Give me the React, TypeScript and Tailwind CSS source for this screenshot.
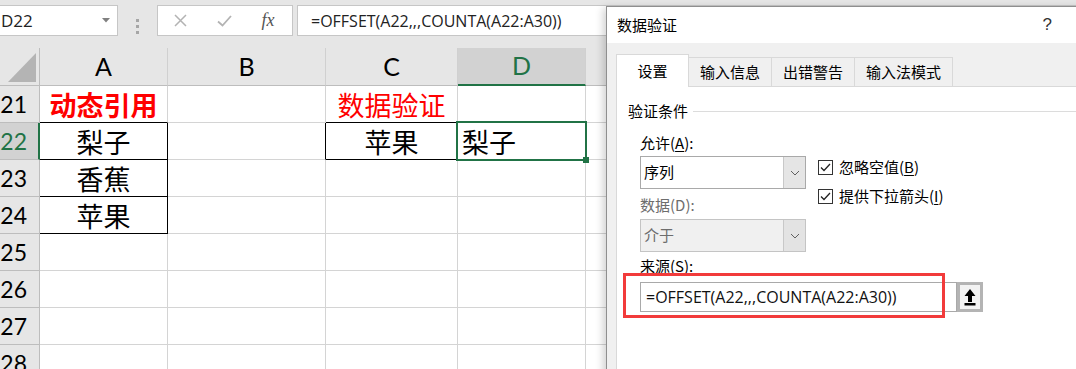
import React from 'react';

type Cell = { t?: string; c?: string; x?: string };

const letters = ['A', 'B', 'C', 'D', 'E'];

const rows: { n: number; cells: Cell[] }[] = [
  {
    n: 21,
    cells: [
      { t: '动态引用', c: 'border-b-black', x: 'justify-center font-bold text-[#ff0000]' },
      {},
      { t: '数据验证', c: 'border-b-black', x: 'justify-center text-[#ff0000]' },
      {},
      {},
    ],
  },
  {
    n: 22,
    cells: [
      { t: '梨子', c: 'border-b-black border-r-black', x: 'justify-center text-black' },
      { c: 'border-r-black' },
      { t: '苹果', c: 'border-b-black', x: 'justify-center text-black' },
      { t: '梨子', x: 'pl-[4px] text-black' },
      {},
    ],
  },
  { n: 23, cells: [{ t: '香蕉', c: 'border-b-black border-r-black', x: 'justify-center text-black' }, {}, {}, {}, {}] },
  { n: 24, cells: [{ t: '苹果', c: 'border-b-black border-r-black', x: 'justify-center text-black' }, {}, {}, {}, {}] },
  { n: 25, cells: [{}, {}, {}, {}, {}] },
  { n: 26, cells: [{}, {}, {}, {}, {}] },
  { n: 27, cells: [{}, {}, {}, {}, {}] },
  { n: 28, cells: [{}, {}, {}, {}, {}] },
];

function Chevron() {
  return (
    <svg width="10" height="6" viewBox="0 0 10 6">
      <path d="M1 1l4 4 4-4" fill="none" stroke="#606060" strokeWidth="1" />
    </svg>
  );
}

function Check() {
  return (
    <div className="flex h-[15px] w-[15px] items-center justify-center border border-[#333] bg-white">
      <svg width="11" height="9" viewBox="0 0 11 9">
        <path d="M1 4.5l3 3L10 1" fill="none" stroke="#222" strokeWidth="1.3" />
      </svg>
    </div>
  );
}

function Toolbar() {
  return (
    <div className="flex h-[48px] bg-[#e6e6e6] pt-[5px]">
      <div className="flex h-[31px] w-[118px] items-center justify-between border border-l-0 border-[#c6c6c6] bg-white pl-[1px] pr-[7px] text-[17px] text-[#222]">
        <span>D22</span>
        <svg width="8" height="5" viewBox="0 0 8 5">
          <path d="M0 0h8L4 4.5z" fill="#808080" />
        </svg>
      </div>
      <div className="flex w-[39px] flex-col items-center justify-center gap-[3px]">
        <span className="h-[3px] w-[3px] bg-[#a6a6a6]" />
        <span className="h-[3px] w-[3px] bg-[#a6a6a6]" />
        <span className="h-[3px] w-[3px] bg-[#a6a6a6]" />
      </div>
      <div className="flex h-[31px] w-[136px] items-center border border-[#c6c6c6] bg-white">
        <span className="flex w-[44px] justify-center">
          <svg width="13" height="13" viewBox="0 0 13 13">
            <path d="M1 1l11 11M12 1L1 12" stroke="#b3b3b3" strokeWidth="1.5" />
          </svg>
        </span>
        <span className="flex w-[44px] justify-center">
          <svg width="15" height="12" viewBox="0 0 15 12">
            <path d="M1 6.5l4.5 4L14 1" fill="none" stroke="#b3b3b3" strokeWidth="1.8" />
          </svg>
        </span>
        <span className="flex w-[44px] justify-center font-['Liberation_Serif',serif] text-[18px] italic text-[#555]">
          fx
        </span>
      </div>
      <div className="ml-[4px] flex h-[31px] flex-1 items-center border border-[#c6c6c6] bg-white pl-[13px] text-[16px] text-[#222]">
        =OFFSET(A22,,,COUNTA(A22:A30))
      </div>
    </div>
  );
}

function Sheet() {
  return (
    <div className="grid grid-cols-[40px_128px_158px_132px_128px_1fr] font-['Noto_Sans_CJK_SC',sans-serif]">
      <div className="relative h-[38px] border-r border-b border-[#bdbdbd] bg-[#e6e6e6]">
        <svg className="absolute left-[8px] top-[5px]" width="28" height="29" viewBox="0 0 28 29">
          <path d="M28 0v29H0z" fill="#b4b4b4" />
        </svg>
      </div>
      {letters.map((l) => (
        <div
          key={l}
          className={
            l === 'D'
              ? "flex h-[38px] items-center justify-center border-r border-b-2 border-r-[#d0d0d0] border-b-[#217346] bg-[#d2d2d2] font-['Lato',sans-serif] text-[25px] text-[#217346]"
              : "flex h-[38px] items-center justify-center border-r border-b border-r-[#d0d0d0] border-b-[#bdbdbd] bg-[#e6e6e6] font-['Lato',sans-serif] text-[25px] text-black"
          }
        >
          {l}
        </div>
      ))}
      {rows.map((r) => (
        <React.Fragment key={r.n}>
          <div
            className={
              r.n === 22
                ? "flex h-[37px] items-center justify-end border-r-2 border-b border-r-[#217346] border-b-[#bdbdbd] bg-[#d2d2d2] pr-[11px] font-['Lato',sans-serif] text-[23px] text-[#217346]"
                : "flex h-[37px] items-center justify-end border-r border-b border-[#bdbdbd] bg-[#e6e6e6] pr-[12px] font-['Lato',sans-serif] text-[23px] text-black"
            }
          >
            {r.n}
          </div>
          {r.cells.map((cell, i) => (
            <div
              key={i}
              className={`relative flex h-[37px] items-center border-r border-b border-[#d4d4d4] bg-white text-[27px] leading-none ${cell.c ?? ''} ${cell.x ?? ''}`}
            >
              {cell.t}
              {r.n === 22 && i === 3 && (
                <>
                  <div className="absolute -bottom-[2px] -left-[2px] -right-[2px] -top-[2px] z-10 border-2 border-[#217346]" />
                  <div className="absolute -bottom-[4px] -right-[4px] z-20 h-[6px] w-[6px] bg-[#217346]" />
                </>
              )}
            </div>
          ))}
        </React.Fragment>
      ))}
    </div>
  );
}

function Dialog() {
  return (
    <div className="absolute left-[606px] top-[6px] h-[380px] w-[480px] border border-[#8f8f8f] bg-[#f0f0f0] font-['Noto_Sans_CJK_SC',sans-serif] text-[15px] text-black shadow-[-3px_2px_8px_rgba(0,0,0,0.18)]">
      <div className="flex h-[36px] items-center justify-between bg-white pl-[10px] pr-[33px]">
        <span>数据验证</span>
        <span className="font-['Liberation_Sans',sans-serif] text-[17px] text-[#333]">?</span>
      </div>
      <div className="pl-[9px] pt-[11px]">
        <div className="flex h-[32px] items-end">
          <div className="relative z-10 -mb-px flex h-[33px] w-[73px] items-center justify-center border border-b-0 border-[#d9d9d9] bg-white">
            设置
          </div>
          <div className="flex h-[29px] w-[83px] items-center justify-center border border-b-0 border-l-0 border-[#d9d9d9]">
            输入信息
          </div>
          <div className="flex h-[29px] w-[83px] items-center justify-center border border-b-0 border-l-0 border-[#d9d9d9]">
            出错警告
          </div>
          <div className="flex h-[29px] w-[98px] items-center justify-center border border-b-0 border-l-0 border-[#d9d9d9]">
            输入法模式
          </div>
        </div>
        <div className="h-[300px] border-t border-l border-[#d9d9d9] bg-white pt-[14px]">
          <div className="flex h-[20px] items-center pl-[11px]">
            <span className="leading-[20px]">验证条件</span>
            <span className="ml-[5px] h-px flex-1 bg-[#dcdcdc]" />
          </div>
          <div className="pl-[23px]">
            <div className="mt-[12px] leading-[20px]">
              允许(<span className="underline underline-offset-2">A</span>):
            </div>
            <div className="mt-[3px] flex">
              <div className="w-[166px]">
                <div className="flex h-[33px] border border-[#a9a9a9] bg-white">
                  <span className="flex flex-1 items-center pl-[3px]">序列</span>
                  <span className="flex w-[22px] items-center justify-center border-l border-[#c8c8c8] bg-[#e5e5e5]">
                    <Chevron />
                  </span>
                </div>
                <div className="mt-[6px] leading-[20px] text-[#6d6d6d]">数据(D):</div>
                <div className="mt-[4px] flex h-[33px] border border-[#c4c4c4] bg-[#f0f0f0] text-[#6d6d6d]">
                  <span className="flex flex-1 items-center pl-[3px]">介于</span>
                  <span className="flex w-[22px] items-center justify-center border-l border-[#c8c8c8] bg-[#e3e3e3]">
                    <Chevron />
                  </span>
                </div>
              </div>
              <div className="ml-[12px] flex flex-col gap-[14px] pt-[4px]">
                <div className="flex h-[15px] items-center gap-[6px]">
                  <Check />
                  <span>
                    忽略空值(<span className="underline underline-offset-2">B</span>)
                  </span>
                </div>
                <div className="flex h-[15px] items-center gap-[6px]">
                  <Check />
                  <span>
                    提供下拉箭头(<span className="underline underline-offset-2">I</span>)
                  </span>
                </div>
              </div>
            </div>
            <div className="mt-[4px] leading-[20px]">来源(S):</div>
            <div className="mt-[6px] flex h-[30px]">
              <div className="flex w-[317px] items-center border border-[#a9a9a9] bg-white pl-[5px] font-['Open_Sans',sans-serif] text-[16px] text-[#111]">
                =OFFSET(A22,,,COUNTA(A22:A30))
              </div>
              <div className="flex w-[26px] items-center justify-center border-[3px] border-[#b4b4b4] bg-[#f3f3f3]">
                <svg width="14" height="18" viewBox="0 0 14 18">
                  <path d="M7 1L1.5 8H5v6h4V8h3.5z" fill="#000" />
                  <rect x="1.5" y="15" width="11" height="2.5" fill="#000" />
                </svg>
              </div>
            </div>
          </div>
        </div>
      </div>
    </div>
  );
}

export default function App() {
  return (
    <div className="relative h-[369px] w-[1076px] overflow-hidden bg-white font-['Open_Sans',sans-serif]">
      <Toolbar />
      <Sheet />
      <Dialog />
      {/* red annotation box */}
      <div className="absolute left-[623px] top-[273px] h-[45px] w-[322px] border-[3px] border-[#f23b3b]" />
    </div>
  );
}
